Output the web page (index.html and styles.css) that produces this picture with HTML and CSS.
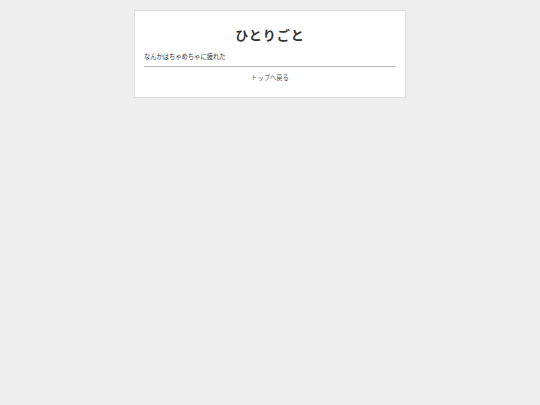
FILE: index.html
```html
<!DOCTYPE html>
<html lang="ja">
<head>
<meta charset="utf-8">
<title>ひとりごと</title>
<link rel="stylesheet" href="styles.css">
</head>
<body>
<div class="card">
  <h1 class="title">ひとりごと</h1>
  <p class="text">なんかはちゃめちゃに疲れた</p>
  <hr class="rule">
  <div class="back"><a href="#" class="back-link">トップへ戻る</a></div>
</div>
</body>
</html>
```

FILE: styles.css
```css
html, body {
  margin: 0;
  padding: 0;
  background: #eeeeee;
  font-family: "Noto Sans CJK JP", "Noto Sans", sans-serif;
  color: #333;
}
.card {
  box-sizing: border-box;
  width: 272px;
  margin: 10px auto 0;
  background: #fff;
  border: 1px solid #dddddd;
  padding: 11px 9px 13px;
}
.title {
  margin: 0;
  text-align: center;
  font-size: 13px;
  font-weight: bold;
  letter-spacing: 1px;
  line-height: 26px;
  color: #333;
}
.text {
  margin: 3px 0 0;
  font-size: 6.3px;
  line-height: 12px;
  color: #333;
}
.rule {
  margin: 3px 0 0;
  border: 0;
  border-top: 1px solid #bbbbbb;
  height: 0;
}
.back {
  text-align: center;
  margin-top: 5px;
  font-size: 6.3px;
  line-height: 12px;
}
.back-link {
  color: #555;
  text-decoration: none;
}
```
